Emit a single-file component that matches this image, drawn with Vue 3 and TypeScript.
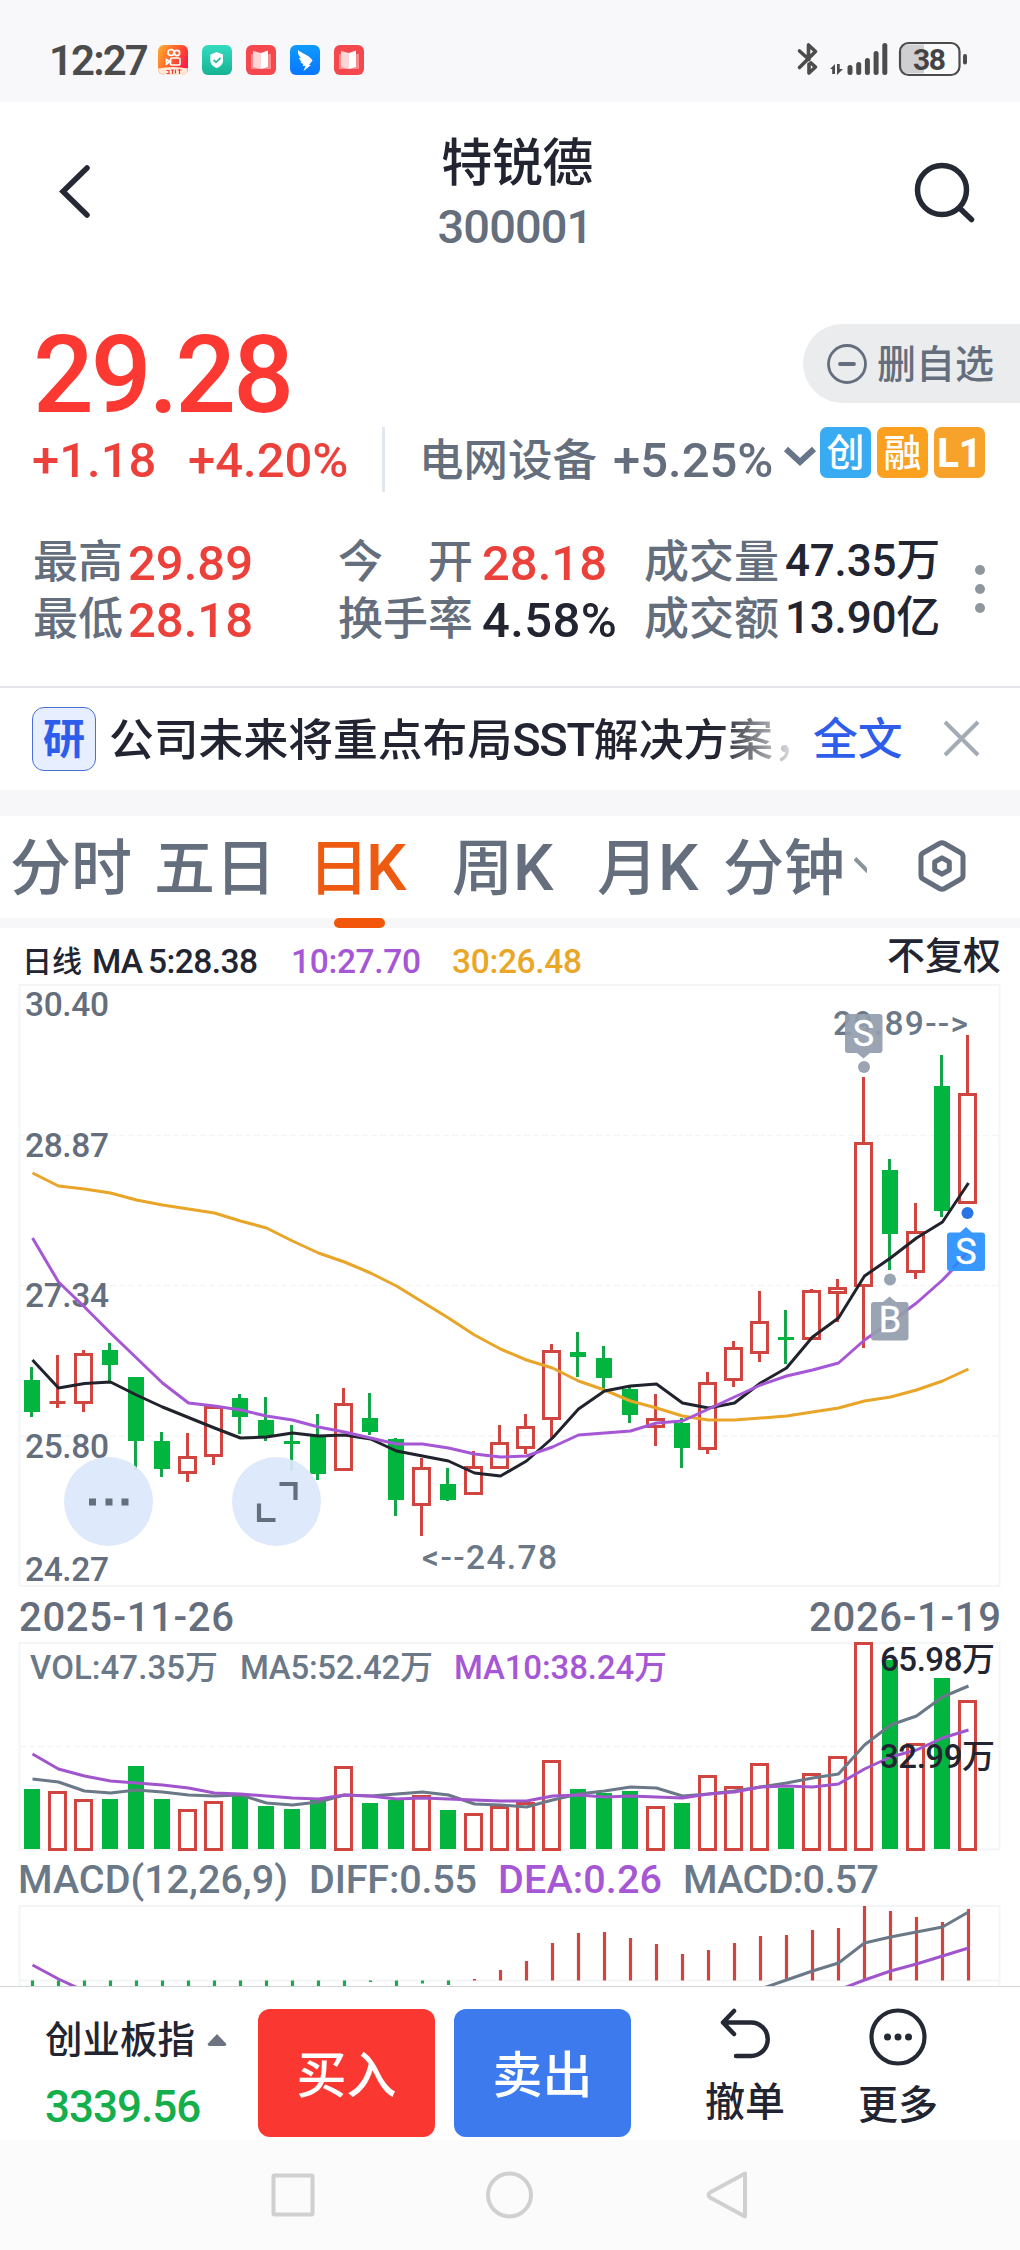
<script setup lang="ts">
type Candle = [up: 0 | 1, high: number, top: number, bottom: number, low: number, volTop: number, macd: number]

interface Label {
  s: string
  x: number
  y: number
  w: number
  size: number
  fill: string
}

const GRAY = '#646e7c'
const SLATE = '#6a7887'
const INK = '#222531'
const PURPLE = '#a557d6'
const GOLD = '#eaa627'

// One entry per trading day; all values are vertical positions in chart space.
const candles: Candle[] = [
  [0, 1367, 1380, 1412, 1417, 1789, 1990], [1, 1355, 1401, 1404, 1408, 1791, 1990],
  [1, 1350, 1353, 1404, 1412, 1799, 1990], [0, 1343, 1350, 1365, 1382, 1799, 1990],
  [0, 1377, 1377, 1441, 1470, 1766, 1990], [0, 1432, 1441, 1469, 1477, 1799, 1990],
  [1, 1433, 1456, 1474, 1482, 1809, 1990], [1, 1406, 1406, 1457, 1465, 1801, 1990],
  [0, 1394, 1398, 1417, 1434, 1796, 1990], [0, 1397, 1420, 1436, 1441, 1806, 1990],
  [0, 1425, 1441, 1444, 1471, 1809, 1990], [0, 1414, 1436, 1474, 1480, 1800, 1990],
  [1, 1388, 1403, 1471, 1471, 1766, 1990], [0, 1393, 1418, 1432, 1435, 1803, 1982],
  [0, 1438, 1439, 1500, 1516, 1800, 1990], [1, 1458, 1467, 1506, 1536, 1795, 1983.5],
  [0, 1468, 1484, 1500, 1501, 1810, 1985], [1, 1451, 1466, 1495, 1495, 1813, 1979],
  [1, 1425, 1442, 1469, 1469, 1806, 1970], [1, 1414, 1426, 1449, 1454, 1802, 1961],
  [1, 1344, 1350, 1420, 1438, 1760, 1943], [0, 1332, 1352, 1357, 1377, 1789, 1933],
  [0, 1346, 1358, 1378, 1390, 1793, 1932], [0, 1386, 1389, 1415, 1423, 1791, 1938],
  [1, 1394, 1418, 1428, 1446, 1806, 1944], [0, 1418, 1423, 1448, 1468, 1803, 1954],
  [1, 1372, 1382, 1450, 1454, 1775, 1950], [1, 1341, 1347, 1381, 1387, 1786, 1943],
  [1, 1291, 1321, 1354, 1362, 1763, 1936], [0, 1310, 1337, 1340, 1364, 1788, 1935],
  [1, 1289, 1290, 1340, 1340, 1773, 1930], [1, 1279, 1287, 1294, 1322, 1756, 1928],
  [1, 1077, 1142, 1287, 1348, 1642, 1906], [0, 1159, 1170, 1234, 1270, 1660, 1911],
  [1, 1203, 1231, 1273, 1279, 1743, 1917], [0, 1055, 1086, 1211, 1217, 1678, 1922],
  [1, 1035, 1093, 1204, 1204, 1700, 1909],
]

const bars = candles.map(([up, high, top, bottom, low, volTop, macd], i) => ({
  up: up === 1, high, top, bottom, low, volTop, macd, x: 31.5 + i * 26,
  // Green bars show the MACD histogram below zero, red above.
  macdColor: up === 1 && macd <= 1980 || macd < 1980 ? '#d0453f' : '#1fa64f',
}))

const poly = (ys: number[], from = 0): string =>
  ys.map((y, i) => `${32.5 + (i + from) * 26},${y}`).join(' ')

const ma5 = poly([1360, 1388, 1383.5, 1382, 1395, 1407, 1417.5, 1428, 1438, 1437, 1433, 1436, 1435, 1439, 1451, 1456, 1461, 1473, 1476, 1461, 1438, 1409, 1391, 1386, 1384, 1403, 1408, 1403, 1383, 1368, 1337, 1318, 1276, 1258, 1238, 1222, 1183])
const ma10 = poly([1238, 1282, 1307, 1333, 1358, 1383, 1403, 1406, 1410, 1416, 1420, 1427, 1432, 1438, 1444, 1444, 1448, 1454, 1457, 1456, 1447, 1435, 1433, 1431, 1423, 1421, 1409, 1397, 1385, 1376, 1370, 1363, 1340, 1322, 1303, 1280, 1253])
const ma30 = poly([1173, 1186, 1189, 1193, 1200, 1205, 1209, 1213, 1221, 1228, 1241, 1253, 1262, 1273, 1286, 1302, 1318, 1335, 1349, 1360, 1368, 1381, 1390, 1401, 1408, 1416, 1420, 1420, 1418, 1416, 1412, 1408, 1401, 1397, 1390, 1381, 1369])
const vol5 = poly([1779, 1782, 1791, 1793, 1790, 1792, 1795, 1796, 1795, 1803, 1805, 1802, 1795, 1796, 1794, 1792, 1795, 1804, 1805, 1807, 1800, 1794, 1791, 1787, 1788, 1796, 1794, 1791, 1787, 1783, 1778, 1774, 1745, 1725, 1716, 1697, 1686])
const vol10 = poly([1754, 1769, 1776, 1781, 1783, 1785, 1788, 1793, 1794, 1796, 1798, 1799, 1795, 1796, 1799, 1798, 1799, 1800, 1801, 1801, 1796, 1795, 1797, 1796, 1797, 1798, 1794, 1792, 1787, 1786, 1787, 1784, 1769, 1757, 1750, 1738, 1730])
const diff = poly([1989, 1980, 1971, 1963, 1943, 1937, 1932, 1927, 1912], 28)
const dea = poly([1990, 1980, 1971, 1964, 1956, 1948], 31)

const underLabels: Label[] = [
  { s: '日线', x: 22, y: 972, w: 60, size: 30, fill: INK },
  { s: 'MA', x: 92, y: 973, w: 51, size: 33.5, fill: INK },
  { s: '5:28.38', x: 148, y: 973, w: 110, size: 33.5, fill: INK },
  { s: '10:27.70', x: 291, y: 973, w: 130, size: 33.5, fill: PURPLE },
  { s: '30:26.48', x: 452, y: 973, w: 130, size: 33.5, fill: GOLD },
  { s: '不复权', x: 887, y: 968.5, w: 114, size: 38, fill: INK },
  { s: '30.40', x: 25, y: 1016, w: 84, size: 33.5, fill: GRAY },
  { s: '28.87', x: 25, y: 1157, w: 84, size: 33.5, fill: GRAY },
  { s: '27.34', x: 25, y: 1307, w: 84, size: 33.5, fill: GRAY },
  { s: '25.80', x: 25, y: 1458, w: 84, size: 33.5, fill: GRAY },
  { s: '24.27', x: 25, y: 1581, w: 84, size: 33.5, fill: GRAY },
  { s: '29.89-->', x: 833, y: 1035, w: 135, size: 33.5, fill: SLATE },
  { s: '<--24.78', x: 422, y: 1569, w: 135, size: 33.5, fill: SLATE },
  { s: '2025-11-26', x: 19, y: 1631, w: 215, size: 40, fill: GRAY },
  { s: '2026-1-19', x: 809, y: 1631, w: 192, size: 40, fill: GRAY },
  { s: 'VOL:47.35万', x: 30, y: 1679, w: 188, size: 33, fill: SLATE },
  { s: 'MA5:52.42万', x: 240, y: 1679, w: 193, size: 33, fill: SLATE },
  { s: 'MA10:38.24万', x: 454, y: 1679, w: 213, size: 33, fill: PURPLE },
  { s: 'MACD(12,26,9)', x: 18, y: 1893, w: 270, size: 39.5, fill: SLATE },
  { s: 'DIFF:0.55', x: 309, y: 1893, w: 168, size: 39.5, fill: SLATE },
  { s: 'DEA:0.26', x: 498, y: 1893, w: 164, size: 39.5, fill: PURPLE },
  { s: 'MACD:0.57', x: 683, y: 1893, w: 196, size: 39.5, fill: SLATE },
]

const overLabels: Label[] = [
  { s: '65.98万', x: 880, y: 1671, w: 115, size: 33, fill: INK },
  { s: '32.99万', x: 880, y: 1768, w: 115, size: 33, fill: INK },
]

const signal = [10, 13, 17, 24, 32]
</script>

<template>
  <div class="screen">
    <header class="status">
      <span class="clock">12:27</span>
      <div class="apps">
        <svg width="30" height="30" viewBox="0 0 30 30">
          <defs>
            <linearGradient id="ks" x1="0" y1="0" x2="1" y2=".5"><stop offset="0" stop-color="#ffb02e" /><stop offset=".6" stop-color="#ff5a2c" /><stop offset="1" stop-color="#ff1f45" /></linearGradient>
          </defs>
          <rect width="30" height="30" rx="6" fill="url(#ks)" />
          <g fill="none" stroke="#fff" stroke-width="1.7">
            <circle cx="13" cy="7.500" r="3" /><circle cx="19" cy="8" r="2.600" />
            <rect x="12.500" y="13" width="9.500" height="7" rx="1.800" /><path d="M12 16.500l-3.500-2v4.500z" />
          </g>
          <path d="M0 23.500q15-3 30 0l-1.500 5q-2 1.500-4.500 1.500H6q-4.500 0-6-6z" fill="#ffe9d6" />
          <path d="M8.500 25.500h2.500v3h-2.500M13 25h3m-1.500 0v4m3-4.500v4m2-3.500h4m-2-1v5" fill="none" stroke="#f23a3a" stroke-width="1.200" />
        </svg>
        <svg width="30" height="30" viewBox="0 0 30 30">
          <defs><linearGradient id="sg" x1="0" y1="0" x2="0" y2="1"><stop offset="0" stop-color="#34dcc0" /><stop offset="1" stop-color="#17b294" /></linearGradient></defs>
          <rect width="30" height="30" rx="6" fill="url(#sg)" />
          <path d="M14.700 7l6.300 2.500v6c0 3.500-2.500 6-6.300 7.500-3.800-1.500-6.300-4-6.300-7.500v-6z" fill="#fff" />
          <path d="M11.500 14.800l2.500 2.500 4.500-4.500" fill="none" stroke="#22bda0" stroke-width="1.800" />
        </svg>
        <svg width="30" height="30" viewBox="0 0 30 30">
          <rect width="30" height="30" rx="6" fill="#f4474e" />
          <path d="M5 9h20v15H5z" fill="#f98a8e" />
          <path d="M7 6l8 2v16l-8-2z" fill="#fdd5d6" /><path d="M15 8l7-2.500V22l-7 2z" fill="#fff" />
        </svg>
        <svg width="30" height="30" viewBox="0 0 30 30">
          <defs><linearGradient id="dt" x1="0" y1="0" x2="0" y2="1"><stop offset="0" stop-color="#0f9bff" /><stop offset="1" stop-color="#0876ff" /></linearGradient></defs>
          <rect width="30" height="30" rx="6" fill="url(#dt)" />
          <path d="M8 5c3 3 13 6 14.500 10.500L19 20h2l-7.500 6 2-5h-3l1-2c-2-.5-3-1.500-3-2.500l2 .2c-2.500-1-3.300-2.700-3.500-4l2 .3C8.300 10.500 7.500 8 8 5z" fill="#fff" />
        </svg>
        <svg width="30" height="30" viewBox="0 0 30 30">
          <rect width="30" height="30" rx="6" fill="#f4474e" />
          <path d="M5 9h20v15H5z" fill="#f98a8e" />
          <path d="M7 6l8 2v16l-8-2z" fill="#fdd5d6" /><path d="M15 8l7-2.500V22l-7 2z" fill="#fff" />
        </svg>
      </div>
      <svg class="sys" width="172" height="36" viewBox="796 41 172 36">
        <g fill="none" stroke="#4c4c4c" stroke-width="3.600" stroke-linecap="round" stroke-linejoin="round">
          <path d="M799.500 51L809 59.500M799.500 67.500L815.500 51.500 808.500 45V58M811 63l4.500 4-6.500 6v-9" />
        </g>
        <path d="M830 69l5-5v10h-2.800v-5zM837 64h2.700v5h3.300l-6 6z" fill="#4c4c4c" />
        <rect v-for="(h, i) in signal" :key="i" :x="847.500 + i * 8.700" :y="75 - h" width="5" :height="h" rx="2.500" fill="#4c4c4c" />
        <rect x="900.500" y="43.500" width="59" height="31" rx="8" fill="#fafafb" />
        <path d="M924 44.500H908q-7 0-7 7v15q0 7 7 7h16z" fill="#cfcfd1" />
        <rect x="900" y="43" width="59.500" height="32" rx="8.500" fill="none" stroke="#4c4c4c" stroke-width="2.200" />
        <rect x="963" y="54" width="4" height="10.500" rx="2" fill="#4c4c4c" />
        <text x="929.500" y="70" text-anchor="middle" font-size="30" font-weight="700" fill="#444" textLength="33">38</text>
      </svg>
    </header>

    <div class="titlebar">
      <svg class="back" width="34" height="56" viewBox="58 163 34 56"><path d="M87 168L63 191.500 87 215" fill="none" stroke="#252934" stroke-width="5.500" stroke-linecap="round" stroke-linejoin="miter" /></svg>
      <div class="name">
        <h1>特锐德</h1>
        <span>300001</span>
      </div>
      <svg class="search" width="64" height="64" viewBox="912 160 64 64"><g fill="none" stroke="#252934" stroke-width="5.500" stroke-linecap="round"><circle cx="942" cy="190" r="24.500" /><path d="M960.500 209l11 10.500" /></g></svg>
    </div>

    <section class="quote">
      <div class="price-row">
        <strong>29.28</strong>
        <button class="fav">
          <svg width="40" height="40" viewBox="0 0 40 40"><g fill="none" stroke="#646e7c" stroke-linecap="round"><circle cx="20" cy="20" r="18.500" stroke-width="2.800" /><path d="M13 20h14" stroke-width="3.800" /></g></svg>
          <span>删自选</span>
        </button>
      </div>
      <div class="change-row">
        <span class="chg">+1.18</span>
        <span class="pct">+4.20%</span>
        <i class="bar"></i>
        <span class="sector">电网设备</span>
        <span class="sector-pct">+5.25%</span>
        <svg class="down" width="34" height="24" viewBox="0 0 34 24"><path d="M3 4l14 13L31 4" fill="none" stroke="#66758a" stroke-width="6" /></svg>
        <div class="tags"><b class="t1">创</b><b class="t2">融</b><b class="t3">L1</b></div>
      </div>
      <div class="stats">
        <div class="col c1">
          <div><label>最高</label><em class="up">29.89</em></div>
          <div><label>最低</label><em class="up">28.18</em></div>
        </div>
        <div class="col c2">
          <div><label>今　开</label><em class="up">28.18</em></div>
          <div><label>换手率</label><em class="rate">4.58%</em></div>
        </div>
        <div class="col c3">
          <div><label>成交量</label><em>47.35万</em></div>
          <div><label>成交额</label><em>13.90亿</em></div>
        </div>
        <div class="dots"><i></i><i></i><i></i></div>
      </div>
    </section>

    <section class="news">
      <span class="yan">研</span>
      <p>公司未来将重点布局<span class="sst">SST</span>解决方案，</p>
      <a>全文</a>
      <svg width="40" height="40" viewBox="0 0 40 40"><path d="M4 4l33 33M37 4L4 37" fill="none" stroke="#a3abb4" stroke-width="4" /></svg>
    </section>

    <nav class="tabs">
      <span class="a">分时</span><span class="b">五日</span><span class="c active">日<i>K</i></span><span class="d">周<i>K</i></span><span class="e">月<i>K</i></span><span class="f">分钟</span>
      <svg class="more" width="14" height="24" viewBox="0 0 14 24"><path d="M1 4L15 18" fill="none" stroke="#8b949a" stroke-width="4.500" /></svg>
      <svg class="hex" width="50" height="54" viewBox="0 0 50 54"><g fill="none" stroke="#646e7c" stroke-width="5" stroke-linejoin="round"><path d="M22.500 4.500Q25 3 27.500 4.500L44 14Q46 15.200 46 17.500V36.500Q46 39 44 40L27.500 49.500Q25 51 22.500 49.500L6 40Q4 39 4 36.500V17.500Q4 15.200 6 14z" /><path d="M25 18.800L32.300 23V31L25 35.200 17.700 31V23z" /></g></svg>
    </nav>
    <div class="band"><i></i></div>

    <section class="chart">
      <svg width="1020" height="1058" viewBox="0 928 1020 1058">
        <g fill="none" stroke="#f4f5f7" stroke-width="2">
          <rect x="19.500" y="985" width="980" height="601" />
          <rect x="19.500" y="1643" width="980" height="206.500" />
          <path d="M19.500 1990V1906H999.500V1990M20 1980.500H999" />
          <path d="M20 1135.500H999M20 1285.500H999M20 1436H999M20 1746.500H999" stroke-width="1.300" stroke-dasharray="6 3" />
        </g>
        <text v-for="l in underLabels" :key="l.s + l.y" :x="l.x" :y="l.y" :font-size="l.size" :fill="l.fill" :textLength="l.w">{{ l.s }}</text>
        <g v-for="b in bars" :key="b.x">
          <template v-if="b.up">
            <path :d="`M${b.x} ${b.high}V${b.top}M${b.x} ${b.bottom}V${b.low}`" stroke="#d0453f" stroke-width="3" />
            <rect v-if="b.bottom - b.top > 4" :x="b.x - 8" :y="b.top + 1.500" width="16" :height="b.bottom - b.top - 3" fill="none" stroke="#d0453f" stroke-width="3" />
            <rect v-else :x="b.x - 8" :y="b.top" width="16" height="3" fill="#d0453f" />
            <rect :x="b.x - 8" :y="b.volTop + 1.500" width="16" :height="1849.500 - b.volTop - 1.500" fill="none" stroke="#d0453f" stroke-width="3" />
          </template>
          <template v-else>
            <path :d="`M${b.x} ${b.high}V${b.low}`" stroke="#14a54a" stroke-width="3" />
            <rect :x="b.x - 7.500" :y="b.top" width="16" :height="b.bottom - b.top" fill="#02b53f" />
            <rect :x="b.x - 7.500" :y="b.volTop" width="16" :height="1849 - b.volTop" fill="#02b53f" />
          </template>
          <path :d="`M${b.x + 1} 1980.500V${b.macd}`" :stroke="b.macdColor" stroke-width="3.200" />
        </g>
        <g fill="none" stroke-width="3" stroke-linejoin="round">
          <polyline :points="ma30" stroke="#e8a528" />
          <polyline :points="ma5" stroke="#20232c" />
          <polyline :points="ma10" stroke="#a557d6" />
          <polyline :points="vol5" stroke="#6a7887" />
          <polyline :points="vol10" stroke="#a055cc" />
          <polyline :points="diff" stroke="#6a7887" />
          <polyline :points="dea" stroke="#a055cc" />
          <polyline points="32.500,1965 58.500,1979 80,1989" stroke="#a055cc" />
        </g>
        <text v-for="l in overLabels" :key="l.s" :x="l.x" :y="l.y" :font-size="l.size" :fill="l.fill" :textLength="l.w">{{ l.s }}</text>
        <g font-size="36" text-anchor="middle">
          <g opacity=".92">
            <path d="M848 1014H879.500Q882.500 1014 882.500 1017V1050Q882.500 1053 879.500 1053H870L863.500 1058.500 857 1053H848Q845 1053 845 1050V1017Q845 1014 848 1014z" fill="#929dac" />
            <circle cx="864" cy="1067" r="6" fill="#929dac" />
            <path d="M874 1302H905.500Q908.500 1302 908.500 1305V1337.500Q908.500 1340.500 905.500 1340.500H874Q871 1340.500 871 1337.500V1305Q871 1302 874 1302H883L889.500 1296.500 896 1302z" fill="#929dac" />
            <circle cx="890" cy="1279.500" r="6" fill="#929dac" />
          </g>
          <path d="M950 1232.500H960L966 1227 972 1232.500H982Q985 1232.500 985 1235.500V1268Q985 1271 982 1271H950Q947 1271 947 1268V1235.500Q947 1232.500 950 1232.500z" fill="#3998ff" />
          <path d="M953 1268L966.500 1253" stroke="#3a80f2" stroke-width="2.800" />
          <circle cx="967.500" cy="1213" r="6" fill="#2a75e6" />
          <g fill="#fff" font-weight="400" stroke="#fff" stroke-width=".4">
            <text x="863.500" y="1046">S</text><text x="890" y="1332">B</text><text x="966" y="1264">S</text>
          </g>
        </g>
      </svg>
      <button class="float one"><svg width="40" height="8" viewBox="0 0 40 8"><path d="M0 .5h7v7H0zM16.500 .5h7v7h-7zM32.500 .5h7v7h-7z" fill="#646e7c" /></svg></button>
      <button class="float two"><svg width="42" height="42" viewBox="0 0 42 42"><path d="M23.500 3H39.500V19M3 22.500V39H19.500" fill="none" stroke="#646e7c" stroke-width="4.200" /></svg></button>
    </section>

    <footer class="trade">
      <div class="index">
        <div class="index-name">创业板指<svg width="20" height="12" viewBox="0 0 20 12"><path d="M10 0L19 9.500Q20 12 17 12H3Q0 12 1 9.500z" fill="#6b7480" /></svg></div>
        <div class="index-val">3339.56</div>
      </div>
      <button class="buy">买入</button>
      <button class="sell">卖出</button>
      <div class="act undo">
        <svg width="54" height="54" viewBox="0 0 54 54"><path d="M16 4L5 15.500 16 27M5 15.500H33A16.500 16.500 0 0 1 33 49H18" fill="none" stroke="#252934" stroke-width="4.500" stroke-linecap="round" stroke-linejoin="round" /></svg>
        <span>撤单</span>
      </div>
      <div class="act others">
        <svg width="58" height="58" viewBox="0 0 58 58"><circle cx="29" cy="29" r="26.500" fill="none" stroke="#252934" stroke-width="4.200" /><g fill="#252934"><circle cx="18.500" cy="29" r="3.500" /><circle cx="29" cy="29" r="3.500" /><circle cx="39.500" cy="29" r="3.500" /></g></svg>
        <span>更多</span>
      </div>
    </footer>

    <div class="sysnav">
      <svg width="1020" height="110" viewBox="0 2140 1020 110"><g fill="none" stroke="#d0d0d0" stroke-width="4" stroke-linejoin="round"><rect x="273.500" y="2175.500" width="39" height="39" rx="1" /><circle cx="509.500" cy="2195" r="21.500" /><path d="M745 2173.500V2216.500L710 2197.500Q707 2195 710 2192.500z" /></g></svg>
    </div>
  </div>
</template>

<style>
body {
  margin: 0;
  background: #fff;
}
</style>

<style scoped>
.screen {
  width: 1020px;
  height: 2250px;
  overflow: hidden;
  display: flex;
  flex-direction: column;
  background: #fff;
  color: #222531;
  font-family: Roboto, "Noto Sans CJK SC", sans-serif;
  font-weight: 500;
  white-space: nowrap;
}
svg {
  display: block;
  flex: none;
}
svg text {
  font-family: Roboto, "Noto Sans CJK SC", sans-serif;
}
button {
  border: 0;
  padding: 0;
  font: inherit;
}
.status {
  height: 102px;
  flex: none;
  box-sizing: border-box;
  padding: 41px 52px 0 49px;
  display: flex;
  background: #f8f8fa;
}
.clock {
  width: 109px;
  font-size: 42px;
  line-height: 40px;
  font-weight: 600;
  letter-spacing: -1.900px;
  color: #4c4c4c;
}
.apps {
  display: flex;
  gap: 14px;
  padding-top: 4px;
}
.sys {
  margin-left: auto;
}
.titlebar {
  height: 200px;
  flex: none;
  display: flex;
}
.back {
  margin: 61px 0 0 58px;
}
.name {
  width: 300px;
  margin-left: 275px;
  padding-top: 27px;
  text-align: center;
  margin-right: 245px;
}
.name h1 {
  margin: 0;
  font-size: 51px;
  line-height: 70px;
  font-weight: 500;
  letter-spacing: -0.5px;
}
.name span {
  display: block;
  margin: 0 0 0 -4px;
  font-size: 47px;
  line-height: 56px;
  letter-spacing: -0.9px;
  color: #646e7c;
}
.search {
  margin-top: 58px;
}
.quote {
  height: 384px;
  flex: none;
}
.price-row {
  display: flex;
  justify-content: space-between;
  height: 125px;
}
.price-row strong {
  margin: 24px 0 0 33px;
  height: 100px;
  font-size: 107px;
  line-height: 100px;
  font-weight: 500;
  letter-spacing: -3px;
  color: #fb3832;
}
.fav {
  margin-top: 22px;
  width: 217px;
  height: 79px;
  border-radius: 40px 0 0 40px;
  background: #eaecee;
  color: #646e7c;
  display: flex;
  align-items: center;
  font-size: 39px;
  line-height: 79px;
  padding-left: 24px;
  box-sizing: border-box;
  gap: 10px;
}
.fav span {
  padding-top: 4px;
}
.change-row {
  height: 66px;
  display: flex;
  line-height: 68px;
  font-size: 49px;
  color: #646e7c;
}
.chg,
.pct {
  color: #ec403a;
}
.chg {
  margin-left: 32px;
  width: 156px;
}
.pct {
  width: 194px;
}
.bar {
  width: 3px;
  height: 65px;
  background: #e2e6ee;
}
.sector {
  margin-left: 34px;
  width: 195px;
  font-size: 44.500px;
}
.sector-pct {
  width: 170px;
  margin-left: -1px;
}
.down {
  margin: 18px 3px 0 0;
}
.tags {
  display: flex;
  gap: 6px;
}
.tags b {
  width: 51px;
  height: 51px;
  border-radius: 7px;
  color: #fff;
  font-size: 38px;
  line-height: 52px;
  text-align: center;
  font-weight: 500;
}
.tags .t1 {
  background: #39abf3;
}
.tags .t2 {
  background: #fba01f;
}
.tags .t3 {
  background: #f7a22b;
  font-weight: 800;
  font-size: 40px;
  line-height: 54px;
}
.stats {
  display: flex;
  margin-top: 41px;
}
.col > div {
  height: 57px;
  line-height: 57px;
  display: flex;
}
.col label {
  font-size: 45px;
  color: #646e7c;
}
.col em {
  font-style: normal;
  font-size: 49px;
  line-height: 60px;
}
.col .rate {
  letter-spacing: 0.4px;
}
.col .up {
  color: #ec403a;
}
.c1 {
  margin-left: 33px;
  width: 305px;
}
.c1 label {
  width: 95px;
}
.c2 {
  width: 306px;
}
.c2 label {
  width: 144px;
}
.c3 label {
  width: 141px;
}
.c3 em {
  font-size: 44px;
  line-height: 54px;
  letter-spacing: -0.2px;
}
.c3 {
  width: 331px;
}
.dots {
  padding-top: 31px;
  display: flex;
  flex-direction: column;
  gap: 9px;
}
.dots i {
  width: 10px;
  height: 10px;
  border-radius: 5px;
  background: #8e979e;
}
.news {
  height: 104px;
  flex: none;
  box-sizing: border-box;
  border-top: 2px solid #e4e4ec;
  display: flex;
  line-height: 104px;
  font-size: 44.800px;
}
.yan {
  margin: 19px 0 0 32px;
  width: 64px;
  height: 64px;
  box-sizing: border-box;
  border: 1.500px solid #4a70d8;
  border-radius: 12px;
  background: #e7eeff;
  color: #2f5deb;
  font-size: 42px;
  line-height: 63px;
  font-weight: 700;
  text-align: center;
}
.news p {
  margin: 0 0 0 13px;
  width: 705px;
  background: linear-gradient(90deg, #222531 610px, #e3e4e6 685px);
  background-clip: text;
  color: transparent;
}
.sst {
  letter-spacing: -1.300px;
  font-size: 47px;
}
.news a {
  margin-left: -1px;
  width: 128px;
  color: #2f5deb;
}
.news > svg {
  margin-top: 30px;
}
.tabs {
  height: 102px;
  flex: none;
  border-top: 26px solid #f7f7fa;
  display: flex;
  line-height: 106px;
  font-size: 61px;
  color: #646e7c;
}
.tabs i {
  font-style: normal;
  font-size: 64px;
}
.tabs .a {
  margin-left: 10px;
  width: 144px;
}
.tabs .b {
  width: 154px;
}
.tabs .c {
  width: 144px;
}
.tabs .c i {
  margin-left: -3px;
}
.tabs .d {
  width: 145px;
}
.tabs .e {
  width: 126px;
}
.tabs .f {
  width: 131px;
}
.tabs .active {
  color: #ee5a10;
}
.more {
  margin: 38px 50px 0 0;
  width: 13px;
}
.hex {
  margin-top: 23px;
}
.band {
  height: 10px;
  flex: none;
  background: #f7f7fa;
}
.band i {
  display: block;
  margin-left: 334px;
  width: 51px;
  height: 10px;
  border-radius: 5px;
  background: #f2560b;
}
.chart {
  position: relative;
  height: 1058px;
  flex: none;
}
.float {
  position: absolute;
  top: 529px;
  width: 89px;
  height: 89px;
  border-radius: 50%;
  background: rgba(219, 231, 251, 0.93);
  display: flex;
  align-items: center;
  justify-content: center;
}
.one {
  left: 64px;
}
.two {
  left: 232px;
}
.trade {
  height: 154px;
  flex: none;
  box-sizing: border-box;
  border-top: 1.500px solid #d2d6da;
  display: flex;
}
.index {
  margin-left: 45px;
  width: 213px;
}
.index-name {
  margin-top: 26px;
  display: flex;
  align-items: center;
  gap: 12px;
  font-size: 37.500px;
  line-height: 54px;
}
.index-val {
  margin-top: 13px;
  font-size: 44px;
  line-height: 54px;
  letter-spacing: -1px;
  color: #14ae4b;
}
.buy,
.sell {
  margin-top: 22px;
  width: 177px;
  height: 128px;
  border-radius: 12px;
  color: #fff;
  font-size: 50px;
  line-height: 134px;
}
.buy {
  background: #fa3730;
}
.sell {
  margin-left: 19px;
  background: #3c7aed;
}
.act {
  display: flex;
  flex-direction: column;
  align-items: center;
  width: 90px;
  font-size: 40px;
  line-height: 50px;
}
.undo {
  margin-left: 69px;
}
.undo svg {
  margin: 20px 0 14px;
}
.undo span {
  margin-top: 3px;
}
.others {
  margin-left: 63px;
}
.others svg {
  margin: 21px 0 15px;
}
.sysnav {
  height: 110px;
  flex: none;
  background: #fbfbfb;
}
</style>
